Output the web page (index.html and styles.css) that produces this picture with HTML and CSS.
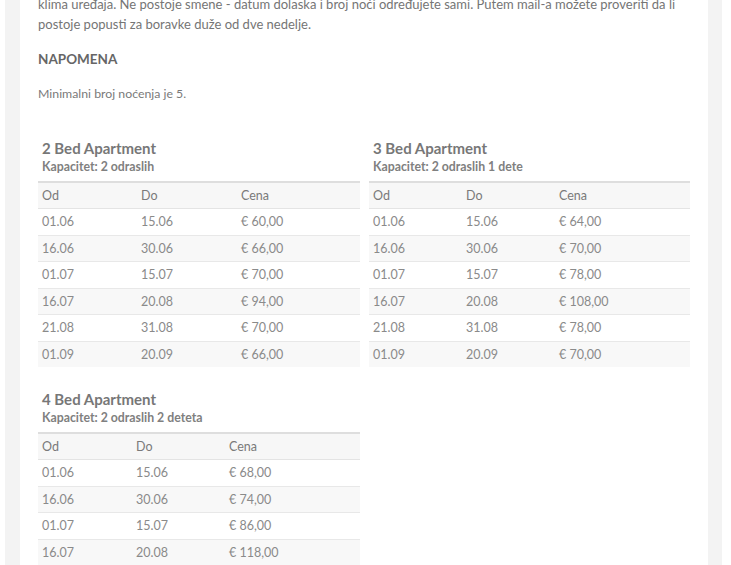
FILE: index.html
```html
<!DOCTYPE html>
<html lang="sr">
<head>
<meta charset="utf-8">
<title>Cenovnik</title>
<link rel="stylesheet" href="styles.css">
</head>
<body>
<div class="frame">
  <main class="content">
    <p class="intro">klima uređaja. Ne postoje smene - datum dolaska i broj noći određujete sami. Putem mail-a možete proveriti da li<br>postoje popusti za boravke duže od dve nedelje.</p>
    <h2 class="note-title">NAPOMENA</h2>
    <p class="note">Minimalni broj noćenja je 5.</p>

    <div class="prices">
      <section class="apt">
        <h3 class="apt-title">2 Bed Apartment</h3>
        <h4 class="apt-cap">Kapacitet: 2 odraslih</h4>
        <table class="price-table t2">
          <thead><tr><th>Od</th><th>Do</th><th>Cena</th></tr></thead>
          <tbody>
            <tr><td>01.06</td><td>15.06</td><td>€ 60,00</td></tr>
            <tr><td>16.06</td><td>30.06</td><td>€ 66,00</td></tr>
            <tr><td>01.07</td><td>15.07</td><td>€ 70,00</td></tr>
            <tr><td>16.07</td><td>20.08</td><td>€ 94,00</td></tr>
            <tr><td>21.08</td><td>31.08</td><td>€ 70,00</td></tr>
            <tr><td>01.09</td><td>20.09</td><td>€ 66,00</td></tr>
          </tbody>
        </table>
      </section>
      <section class="apt">
        <h3 class="apt-title">3 Bed Apartment</h3>
        <h4 class="apt-cap">Kapacitet: 2 odraslih 1 dete</h4>
        <table class="price-table t3">
          <thead><tr><th>Od</th><th>Do</th><th>Cena</th></tr></thead>
          <tbody>
            <tr><td>01.06</td><td>15.06</td><td>€ 64,00</td></tr>
            <tr><td>16.06</td><td>30.06</td><td>€ 70,00</td></tr>
            <tr><td>01.07</td><td>15.07</td><td>€ 78,00</td></tr>
            <tr><td>16.07</td><td>20.08</td><td>€ 108,00</td></tr>
            <tr><td>21.08</td><td>31.08</td><td>€ 78,00</td></tr>
            <tr><td>01.09</td><td>20.09</td><td>€ 70,00</td></tr>
          </tbody>
        </table>
      </section>
      <section class="apt">
        <h3 class="apt-title">4 Bed Apartment</h3>
        <h4 class="apt-cap">Kapacitet: 2 odraslih 2 deteta</h4>
        <table class="price-table t4">
          <thead><tr><th>Od</th><th>Do</th><th>Cena</th></tr></thead>
          <tbody>
            <tr><td>01.06</td><td>15.06</td><td>€ 68,00</td></tr>
            <tr><td>16.06</td><td>30.06</td><td>€ 74,00</td></tr>
            <tr><td>01.07</td><td>15.07</td><td>€ 86,00</td></tr>
            <tr><td>16.07</td><td>20.08</td><td>€ 118,00</td></tr>
          </tbody>
        </table>
      </section>
    </div>
  </main>
</div>
</body>
</html>
```

FILE: styles.css
```css
html, body {
  margin: 0;
  padding: 0;
  background: #ffffff;
  overflow: hidden;
  height: 565px;
}
body {
  font-family: Lato, "Open Sans", sans-serif;
  color: #777777;
}
.frame {
  margin-left: 5px;
  width: 717px;
  background: #f3f3f3;
  padding: 0 14px 0 15px;
  box-sizing: border-box;
}
.content {
  background: #ffffff;
  padding: 0 18px 10px 18px;
  margin-top: -6px;
}
.intro {
  margin: 0;
  font-size: 13px;
  line-height: 20px;
  color: #757575;
  white-space: nowrap;
}
.note-title {
  margin: 15px 0 0 0;
  font-size: 13.5px;
  line-height: 20px;
  font-weight: 700;
  color: #666666;
}
.note {
  margin: 15px 0 0 0;
  font-size: 12.3px;
  line-height: 20px;
  color: #7a7a7a;
}
.prices {
  display: grid;
  grid-template-columns: 322px 321px;
  column-gap: 9px;
  row-gap: 22px;
  margin-top: 34px;
}
.apt-title {
  margin: 0 0 0 4px;
  font-size: 15px;
  line-height: 20px;
  font-weight: 700;
  color: #777777;
}
.apt-cap {
  margin: 0 0 0 4px;
  font-size: 12.3px;
  line-height: 17px;
  font-weight: 700;
  color: #808080;
}
.price-table {
  width: 100%;
  border-collapse: collapse;
  margin-top: 6px;
  font-size: 12.5px;
  color: #8a8a8a;
}
.price-table thead tr {
  background: #f7f7f7;
  border-top: 2px solid #dedede;
}
.price-table th {
  text-align: left;
  font-weight: 400;
  color: #7a7a7a;
  padding: 0 4px;
  height: 25px;
  border-bottom: 1px solid #e4e4e4;
}
.price-table td {
  padding: 0 4px;
  height: 25.5px;
  border-bottom: 1px solid #e8e8e8;
}
.price-table tbody tr:nth-child(even) {
  background: #f8f8f8;
}
.price-table tbody tr:last-child td {
  border-bottom: 0;
}
.t2 th:nth-child(1) { width: 91px; }
.t2 th:nth-child(2) { width: 92px; }
.t3 th:nth-child(1) { width: 85px; }
.t3 th:nth-child(2) { width: 85px; }
.t4 th:nth-child(1) { width: 86px; }
.t4 th:nth-child(2) { width: 85px; }
```
